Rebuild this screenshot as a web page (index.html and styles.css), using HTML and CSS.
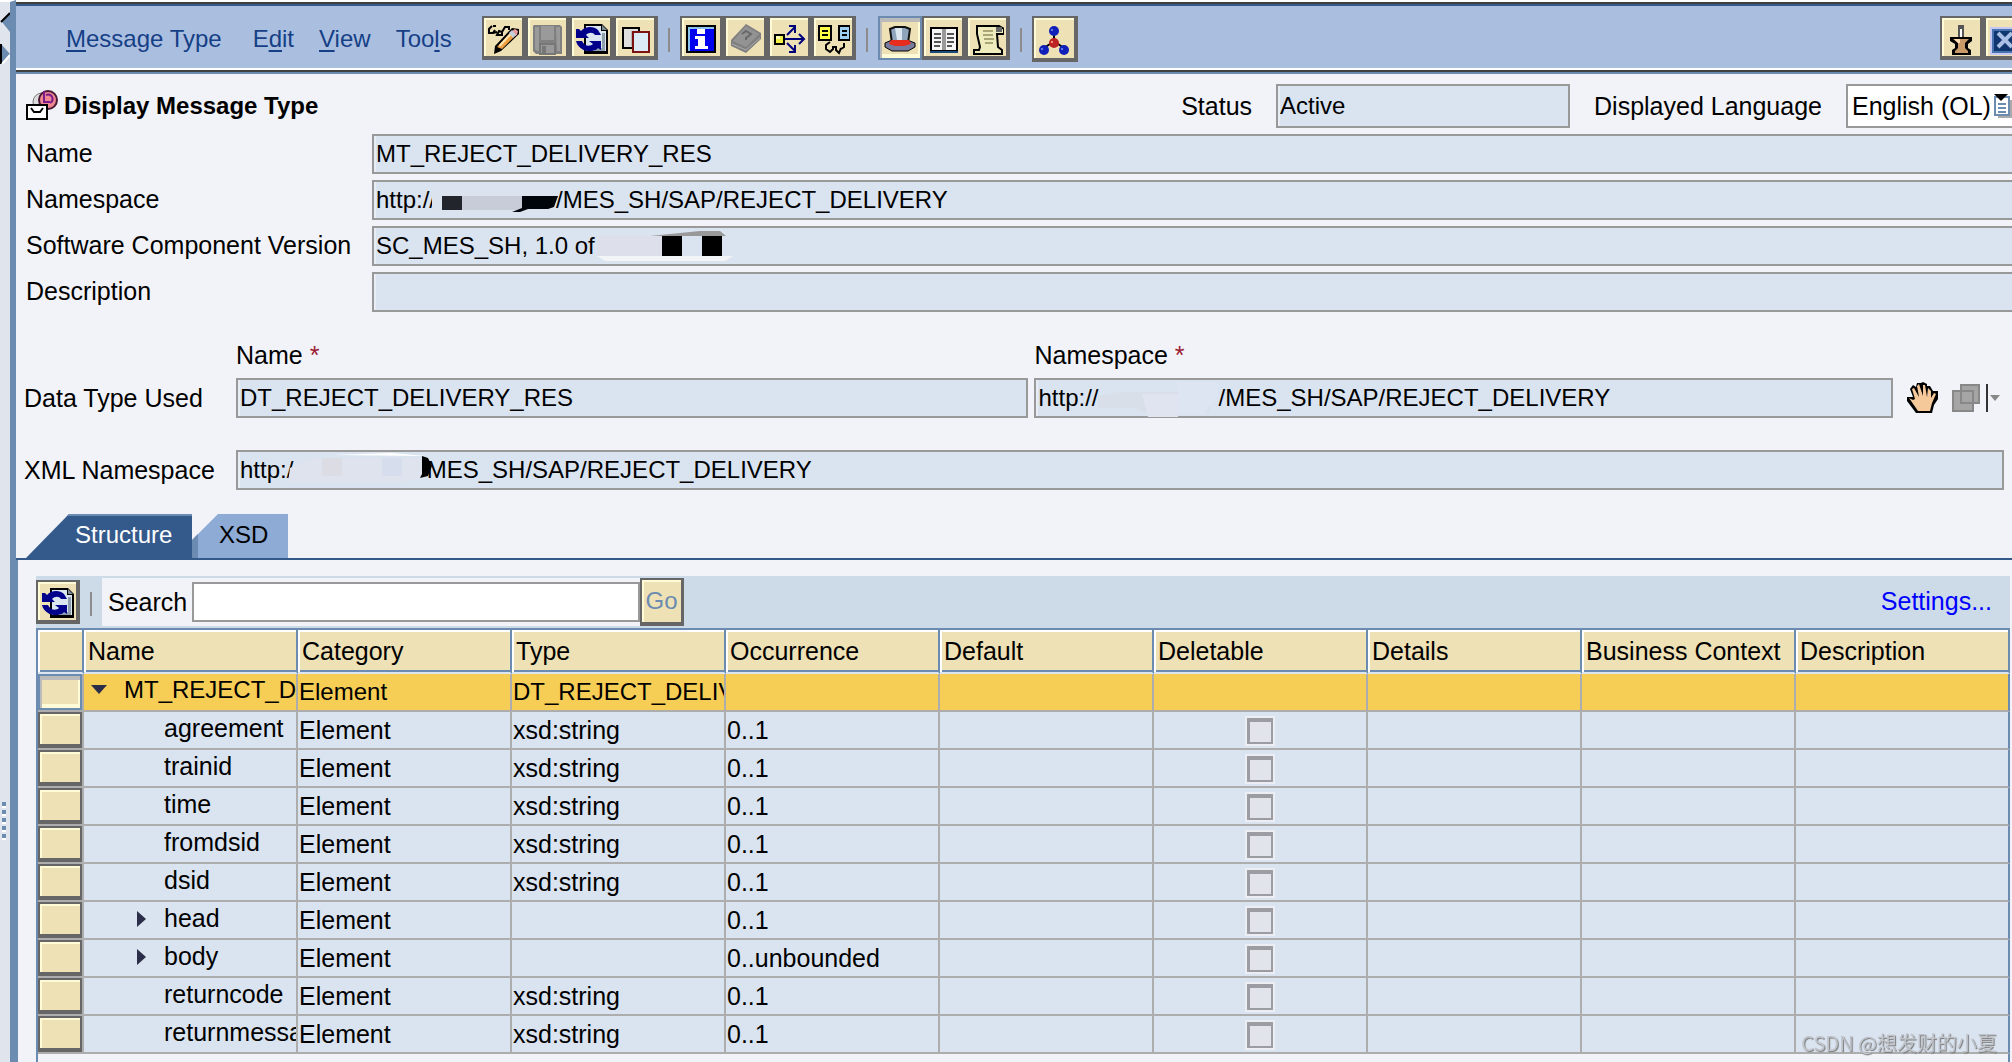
FILE: index.html
```
<!DOCTYPE html>
<html lang="en">
<head>
    <meta charset="UTF-8">
    <title>Display Message Type</title>
    <link rel="stylesheet" href="styles.css">
</head>
<body>
    <svg class="defs">
        <symbol id="i-refresh" viewBox="0 0 32 32">
            <path d="M8 1h18l6 6v24H8z" fill="#000"/>
            <path d="M10 3h15v5h5v20H10z" fill="#dbe7f0"/>
            <path d="M26 2l5 5h-5z" fill="#7b8b95"/>
            <path d="M26 10h3v18H18v-3h8z" fill="#8ea0ad"/>
            <path d="M0 6h3l2 2c4-5 13-5 17-1l3 5h-6c-2-3-6-3-9 0l3 3H0z" fill="#00008b"/>
            <path d="M0 18h6c2 5 8 6 11 3l-4-3h12v9l-3-2c-3 4-12 4-16 1-3-2-5-4-6-8z" fill="#00008b"/>
        </symbol>
    </svg>

    <div class="rail">
        <svg class="rail-arrows" viewBox="0 0 10 60"><path d="M10 9L2 18l8 10z" fill="#6b8bb0"/><path d="M10 9L1 18" stroke="#000" stroke-width="2"/><path d="M2 41l8 9-8 9z" fill="#6b8bb0"/><path d="M0 40h2v20H0z"/><path d="M10 51l-8 9" stroke="#fff" stroke-width="2"/></svg>
        <div class="rail-grip"></div>
    </div>

    <div class="window">
        <!-- menu and toolbar -->
        <header class="topbar">
            <nav class="menu">
                <a href="#"><u>M</u>essage Type</a>
                <a href="#">E<u>d</u>it</a>
                <a href="#"><u>V</u>iew</a>
                <a href="#">Too<u>l</u>s</a>
            </nav>
            <div class="tools">
                <button class="btn" title="Edit"><svg viewBox="0 0 32 32"><path d="M4 3L1 6v4h4l2-3M11 8l-2 4h5V9zM5 10l4-1M5 3h3M14 9l3-5h4v3" fill="none" stroke="#000" stroke-width="2"/><path d="M7 23L24 5l7 1v5L13 28l-7 3z" fill="#000"/><path d="M9 24L23 9l5 3-14 14z" fill="#f0a040"/><path d="M11 22L23 9l2 1-13 14z" fill="#ffe6b0"/><path d="M24 8l3-2 3 2-1 4-2 1z" fill="#e99a9a"/><path d="M21 10l3-3 4 5-3 3z" fill="#c5cfdc"/></svg></button>
                <button class="btn" title="Save" disabled><svg viewBox="0 0 32 32"><path d="M2 2h26l2 2v27H4l-3-3V3z" fill="#808080"/><path d="M3 4h4v24H5l-2-2zM24 4h4v24h-3zM9 3h13v14H9z" fill="#9a9a9a"/><path d="M8 21h15v10H8z" fill="#999" stroke="#777" stroke-width="2"/><path d="M10 23h4v7h-4z" fill="#777"/></svg></button>
                <button class="btn" title="Refresh"><svg><use href="#i-refresh"/></svg></button>
                <button class="btn" title="Copy"><svg viewBox="0 0 32 32"><path d="M3 5h16v20H3z" fill="#dedede" stroke="#000" stroke-width="2"/><path d="M11 8h7v15h-7z" fill="#b5b5b5"/><path d="M13 9h16v20H13z" fill="#dceaf5" stroke="#7d1212" stroke-width="2"/></svg></button>
            </div>
            <span class="sep"></span>
            <div class="tools">
                <button class="btn" title="Info"><svg viewBox="0 0 32 32"><path d="M0 2h30v28H0z" fill="#000"/><path d="M2 4h26v24H2z" fill="#0000f0"/><path d="M2 4h26v2H4v22H2z" fill="#8cc4ec"/><path d="M11 6h8v5h-8zM9 13h10v10h3v3H9v-3h3v-7H9z" fill="#fff"/></svg></button>
                <button class="btn" title="Help" disabled><svg viewBox="0 0 32 32"><path d="M16 1l15 9v6L16 30 1 23v-6z" fill="#808080"/><path d="M16 3l13 8-13 13L3 18z" fill="#939393"/><path d="M12 11l4-3 5 3-5 4v2" fill="none" stroke="#696969" stroke-width="2"/><path d="M2 21l14 6 14-12" fill="none" stroke="#aaa"/></svg></button>
                <button class="btn" title="Where used"><svg viewBox="0 0 32 32"><path d="M9 16h20M13 12l8-8M13 20l8 8M15 3h6v7M25 11l5 5-5 5M15 29h6v-7" fill="none" stroke="#00007d" stroke-width="2"/><path d="M1 12h9v9H1z" fill="#f2ef45" stroke="#000" stroke-width="2"/><path d="M2 13h4v3H2z" fill="#ffffb5"/></svg></button>
                <button class="btn" title="Compare"><svg viewBox="0 0 32 32"><path d="M1 3h12v14H1z" fill="#ffff45" stroke="#000" stroke-width="2"/><path d="M21 3h11v14H21z" fill="#9dd0f0" stroke="#000" stroke-width="2"/><path d="M4 8h6M4 12h6M24 8h5M24 12h5" stroke="#000" stroke-width="2"/><path d="M12 19l-4 3v4l4 3 3-3v-3M15 24h3M18 23v4l3 3 2-5M26 20v4l-3 2" stroke="#000" stroke-width="2" fill="none"/></svg></button>
            </div>
            <span class="sep"></span>
            <div class="tools">
                <button class="btn pressed" title="Display header"><svg viewBox="0 0 32 32"><path d="M1 19l7-3h15l8 3v4l-7 4H8l-7-4z" fill="#777b9d" stroke="#000"/><path d="M6 5l5-2h10l5 2-2 14H8z" fill="#8fa3ba" stroke="#111" stroke-width="2"/><path d="M11 4h7v12h-5z" fill="#dce6ee"/><path d="M7 16h18l2 4-7 2h-9l-6-2z" fill="#e82d20"/></svg></button>
                <button class="btn" title="Documentation"><svg viewBox="0 0 32 32"><path d="M2 4h28v26H2z" fill="#000"/><path d="M4 6h11v21H4zM17 6h11v21H17z" fill="#f5f5f5"/><path d="M14 6h4v21h-4z" fill="#999"/><path d="M6 11h7M6 15h7M6 19h7M6 23h6M19 11h7M19 15h7M19 19h7M19 23h5" stroke="#555" stroke-width="2"/><path d="M2 28h28v2H2z" fill="#194a7a"/></svg></button>
                <button class="btn" title="Log"><svg viewBox="0 0 32 32"><path d="M5 3h22l5 3v5h-7l1 13 4 3v4H2v-4h5l1-3-3-13z" fill="#eeebbd" stroke="#000" stroke-width="2"/><path d="M11 8h10M11 12h10M12 16h10M13 20h8" stroke="#aaa678" stroke-width="2"/><path d="M24 4h6v5h-6z" fill="#666"/></svg></button>
            </div>
            <span class="sep"></span>
            <button class="btn wide" title="Dependencies"><svg viewBox="0 0 32 32"><path d="M16 8v9M15 18L6 24M17 18l9 6" stroke="#000" stroke-width="2"/><circle cx="16" cy="7" r="5" fill="#1020b8"/><circle cx="6" cy="26" r="5" fill="#1020b8"/><circle cx="26" cy="26" r="5" fill="#1020b8"/><circle cx="16" cy="19" r="5" fill="#bd2323"/><path d="M13 5h2v2h-2zM3 24h2v2H3zM23 24h2v2h-2z" fill="#6677e0"/><path d="M13 17h2v2h-2z" fill="#f28b75"/></svg></button>
            <div class="tools right">
                <button class="btn" title="Pin"><svg viewBox="0 0 32 32"><path d="M12 2h6v14h-6z" fill="#555"/><path d="M14 6h2v9h-2z" fill="#fff"/><path d="M4 14h22v4l-4 3v4l3 2v5H6v-5l3-2v-4l-5-3z" fill="#000"/><path d="M7 16h16l-4 4v5l3 3v2H9v-2l3-3v-5z" fill="#c89a68"/><path d="M8 16h6v4h-2z" fill="#fbdbb0"/></svg></button>
                <button class="btn cut" title="Close"><svg viewBox="0 0 32 32"><path d="M0 4h32v28H0z" fill="#c5c8f0"/><path d="M2 6h30v24H2z" fill="#4873b0"/><path d="M4 8h28v20H4z" fill="#10366f"/><path d="M8 10l14 14M22 10L8 24" stroke="#a9bfe5" stroke-width="4"/></svg></button>
            </div>
        </header>

        <main>
            <section class="title-row">
                <svg class="type-icon" viewBox="0 0 32 32"><circle cx="16" cy="12" r="9" fill="#ddd" stroke="#777"/><circle cx="22" cy="10" r="9" fill="#ef8791" stroke="#4b1a35" stroke-width="2"/><path d="M18 1v11h6M20 5c6-2 9 5 4 8" fill="none" stroke="#7a1c8c" stroke-width="2"/><path d="M1 15h20v14H1z" fill="#fff" stroke="#000" stroke-width="2"/><path d="M5 18l3 4h6l3-4" fill="none" stroke="#000" stroke-width="2"/></svg>
                <h1>Display Message Type</h1>
                <label for="status">Status</label>
                <input class="field status" id="status" value="Active" readonly>
                <label for="lang">Displayed Language</label>
                <div class="select">
                    <select id="lang"><option>English (OL)</option></select>
                    <svg viewBox="0 0 18 24"><path d="M4 6h14v18H4z" fill="#aaa"/><path d="M1 3h14v18H1z" fill="#fff" stroke="#6b8bb0" stroke-width="2"/><path d="M4 10h8M4 14h8M4 18h8" stroke="#6b8bb0" stroke-width="2"/><path d="M0 0h14L7 7z"/></svg>
                </div>
            </section>

            <section class="form">
                <label for="name">Name</label>
                <div class="box"><input class="field" id="name" value="MT_REJECT_DELIVERY_RES" readonly></div>
                <label for="ns">Namespace</label>
                <div class="box">
                    <input class="field" id="ns" value="http://                  /MES_SH/SAP/REJECT_DELIVERY" readonly>
                    <svg class="mask" viewBox="0 0 400 40"><path d="M60 6h122v26H60z" fill="#dbe3ef"/><path d="M70 16h20v14H70z" fill="#22252c"/><path d="M90 16h60v14H90z" fill="#c7ccd8"/><path d="M150 16h36l-4 11-6 2h-20l-8 3h-8l10-4z" fill="#00050c"/></svg>
                </div>
                <label for="scv">Software Component Version</label>
                <div class="box">
                    <input class="field" id="scv" value="SC_MES_SH, 1.0 of" readonly>
                    <svg class="mask" viewBox="0 0 400 40"><path d="M278 10l50-5h20l6 5z" fill="#999"/><path d="M226 10h64v20h-64z" fill="#dddfea"/><path d="M290 10h20v20h-20zM330 10h20v20h-20z"/><path d="M225 30h136l-8 5H233z" fill="#f3f4f6"/></svg>
                </div>
                <label for="desc">Description</label>
                <div class="box"><input class="field" id="desc" readonly></div>
            </section>

            <section class="types">
                <label class="head c2" for="dt">Name <em>*</em></label>
                <label class="head c3" for="dtns">Namespace <em>*</em></label>
                <label class="c1" for="dt">Data Type Used</label>
                <input class="field" id="dt" value="DT_REJECT_DELIVERY_RES" readonly>
                <div class="box second">
                    <input class="field" id="dtns" value="http://                  /MES_SH/SAP/REJECT_DELIVERY" readonly>
                    <svg class="mask" viewBox="0 0 400 40"><path d="M64 18l20-4h100l-10 20H110l-8-4H64z" fill="#d8dfe9"/><path d="M108 16h36v23h-30z" fill="#e0e4f1"/><path d="M144 4h40v14l-14 18h-26z" fill="#dde4f2"/></svg>
                </div>
                <div class="type-actions">
                    <svg viewBox="0 0 32 32"><path d="M1 15h6L4 7l3-4 3 2 1-4h4l2-1 4 2v2h3l3 5h5v8l-4 6-2 8H10l-6-8-3-4z" fill="#000"/><path d="M3 16l4 2 2-1L6 7l2-1 5 9L11 4l2-2 4 12V3h2l2 12 1-9 3 3v7l3-5 2 1-4 9-2 8H12z" fill="#f5c99a"/></svg>
                    <svg viewBox="0 0 28 28"><path d="M9 1h18v18H9zM1 7h20v20H1z" fill="#a5a5a5" stroke="#888" stroke-width="2"/></svg>
                    <span class="bar"></span>
                    <span class="tri"></span>
                </div>
            </section>

            <section class="xml">
                <label for="xns">XML Namespace</label>
                <div class="box">
                    <input class="field" id="xns" value="http:/                    MES_SH/SAP/REJECT_DELIVERY" readonly>
                    <svg class="mask" viewBox="0 0 400 40"><path d="M54 18l20-10h112v20l-20 4H52z" fill="#dfe3ee"/><path d="M86 8h20v18H86z" fill="#dcdde4"/><path d="M146 8h20v18h-20z" fill="#d6deee"/><path d="M96 5l60-2 34 3z" fill="#fff"/><path d="M186 6l6 2 4 8-4 10-8 2 2-4z"/></svg>
                </div>
            </section>

            <nav class="tabs">
                <a class="tab active" href="#">Structure</a>
                <a class="tab" href="#">XSD</a>
            </nav>

            <section class="panel">
                <div class="searchbar">
                    <button class="btn" title="Refresh"><svg><use href="#i-refresh"/></svg></button>
                    <span class="sep"></span>
                    <form class="search">
                        <label for="q">Search</label>
                        <input id="q" type="text">
                        <button class="go" type="button">Go</button>
                    </form>
                    <a class="settings" href="#">Settings...</a>
                </div>

                <div class="grid">
                    <table>
                        <thead>
                            <tr><th class="sel"></th><th>Name</th><th>Category</th><th>Type</th><th>Occurrence</th><th>Default</th><th>Deletable</th><th>Details</th><th>Business Context</th><th>Description</th></tr>
                        </thead>
                        <tbody>
                            <tr class="current"><td class="sel"><button title="Select row"></button></td><td class="node root"><i class="open"></i>MT_REJECT_DELIVERY_RES</td><td>Element</td><td>DT_REJECT_DELIVERY_RES</td><td></td><td></td><td></td><td></td><td></td><td></td></tr>
                            <tr><td class="sel"><button title="Select row"></button></td><td class="node">agreement</td><td>Element</td><td>xsd:string</td><td>0..1</td><td></td><td class="check"><input type="checkbox" aria-label="Deletable" disabled></td><td></td><td></td><td></td></tr>
                            <tr><td class="sel"><button title="Select row"></button></td><td class="node">trainid</td><td>Element</td><td>xsd:string</td><td>0..1</td><td></td><td class="check"><input type="checkbox" aria-label="Deletable" disabled></td><td></td><td></td><td></td></tr>
                            <tr><td class="sel"><button title="Select row"></button></td><td class="node">time</td><td>Element</td><td>xsd:string</td><td>0..1</td><td></td><td class="check"><input type="checkbox" aria-label="Deletable" disabled></td><td></td><td></td><td></td></tr>
                            <tr><td class="sel"><button title="Select row"></button></td><td class="node">fromdsid</td><td>Element</td><td>xsd:string</td><td>0..1</td><td></td><td class="check"><input type="checkbox" aria-label="Deletable" disabled></td><td></td><td></td><td></td></tr>
                            <tr><td class="sel"><button title="Select row"></button></td><td class="node">dsid</td><td>Element</td><td>xsd:string</td><td>0..1</td><td></td><td class="check"><input type="checkbox" aria-label="Deletable" disabled></td><td></td><td></td><td></td></tr>
                            <tr><td class="sel"><button title="Select row"></button></td><td class="node parent"><i class="closed"></i>head</td><td>Element</td><td></td><td>0..1</td><td></td><td class="check"><input type="checkbox" aria-label="Deletable" disabled></td><td></td><td></td><td></td></tr>
                            <tr><td class="sel"><button title="Select row"></button></td><td class="node parent"><i class="closed"></i>body</td><td>Element</td><td></td><td>0..unbounded</td><td></td><td class="check"><input type="checkbox" aria-label="Deletable" disabled></td><td></td><td></td><td></td></tr>
                            <tr><td class="sel"><button title="Select row"></button></td><td class="node">returncode</td><td>Element</td><td>xsd:string</td><td>0..1</td><td></td><td class="check"><input type="checkbox" aria-label="Deletable" disabled></td><td></td><td></td><td></td></tr>
                            <tr><td class="sel"><button title="Select row"></button></td><td class="node">returnmessage</td><td>Element</td><td>xsd:string</td><td>0..1</td><td></td><td class="check"><input type="checkbox" aria-label="Deletable" disabled></td><td></td><td></td><td></td></tr>
                        </tbody>
                    </table>
                </div>
            </section>
        </main>
    </div>

    <div class="watermark">CSDN @想发财的小夏</div>
</body>
</html>
```
FILE: styles.css
```
:root {
    --bg: #f2f3f8;
    --steel: #6b8bb0;
    --navy: #345a8c;
    --field: #dae4f0;
    --sand: #eee1b5;
    --gray: #999;
    --line: #adadad;
}

* {
    box-sizing: border-box;
}

body {
    margin: 0;
    min-height: 100vh;
    display: flex;
    overflow: hidden;
    background: var(--bg);
    color: #000;
    font: 25px/30px "Liberation Sans", Arial, "Noto Sans CJK SC", sans-serif;
}

input, select, button {
    font: inherit;
    color: inherit;
    border-radius: 0;
    margin: 0;
}

a {
    text-decoration: none;
}

.defs {
    position: absolute;
    width: 0;
    height: 0;
}

/* left splitter */
.rail {
    flex: none;
    width: 16px;
    position: relative;
    border-top: 2px solid #fff;
    border-right: 6px solid var(--steel);
    background: #e0e4ed;
}

.rail-arrows {
    position: absolute;
    top: 2px;
    left: 0;
    width: 10px;
    height: 60px;
}

.rail-grip {
    position: absolute;
    top: 800px;
    left: 2px;
    width: 4px;
    height: 38px;
    background: repeating-linear-gradient(var(--steel) 0 4px, #fff 4px 6px, transparent 6px 8px);
}

.window {
    flex: 1;
    min-width: 0;
    display: flex;
    flex-direction: column;
    border-top: 2px solid #fff;
}

/* menu bar */
.topbar {
    height: 72px;
    padding: 10px 0 0 50px;
    display: flex;
    align-items: flex-start;
    background: #aabfe0;
    border-top: 2px solid #404040;
    border-bottom: 2px solid var(--steel);
    box-shadow: inset 0 2px var(--navy), inset 0 -2px #404040, inset 0 -4px #fff;
}

.menu {
    display: flex;
    gap: 25px;
    width: 416px;
    padding-top: 10px;
    font-size: 24px;
    white-space: nowrap;
}

.menu a {
    color: #163f86;
}

.menu a:first-child {
    margin-right: 6px;
}

.menu u {
    text-underline-offset: 3px;
    text-decoration-thickness: 2px;
    text-decoration-skip-ink: none;
}

.tools {
    display: flex;
    margin-top: 2px;
}

.btn {
    flex: none;
    width: 44px;
    height: 44px;
    padding: 4px 0 0 4px;
    border: 2px solid #666;
    border-right-width: 4px;
    border-bottom-width: 4px;
    background: var(--sand);
    box-shadow: inset 2px 2px #fffbd6;
}

.btn svg {
    display: block;
    width: 32px;
    height: 32px;
}

.btn.pressed {
    border: 2px solid var(--steel);
    box-shadow: inset 2px 4px #bbb, inset -2px -4px #fffbd6;
}

.btn.wide {
    width: 46px;
    height: 46px;
    margin-top: 2px;
}

.btn.cut {
    width: 28px;
    border-right: 0;
    overflow: hidden;
}

.tools.right {
    margin-left: auto;
}

.sep {
    width: 2px;
    height: 24px;
    margin: 14px 10px 0;
    background: #8c8c8c;
}

/* header form */
.title-row {
    height: 60px;
    padding: 10px 0 6px 10px;
    display: flex;
    align-items: center;
}

.title-row label {
    margin-right: 24px;
}

.type-icon {
    width: 32px;
    height: 32px;
    margin-right: 6px;
}

h1 {
    flex: 1;
    margin: 0;
    font-size: 24px;
    line-height: 30px;
}

.field {
    display: block;
    width: 100%;
    height: 40px;
    padding: 0 2px;
    border: 2px solid var(--gray);
    background: var(--field);
    box-shadow: inset 2px 0 #e8edf5;
    font-size: 24px;
    outline: none;
}

.field.status {
    width: 294px;
    height: 44px;
    margin-right: 24px;
}

.select {
    position: relative;
    width: 166px;
}

.select select {
    display: block;
    appearance: none;
    width: 100%;
    height: 44px;
    padding: 0 4px;
    border: 2px solid var(--gray);
    border-right: 0;
    background: #fff;
}

.select svg {
    position: absolute;
    top: 10px;
    right: 0;
    width: 18px;
    height: 24px;
}

.form {
    display: grid;
    grid-template-columns: 346px 1fr;
    row-gap: 6px;
    align-items: center;
    padding-left: 10px;
}

.form label {
    padding-bottom: 2px;
}

.form .field {
    border-right: 0;
}

.box {
    position: relative;
}

.mask {
    position: absolute;
    top: 0;
    left: 0;
    width: 400px;
    height: 40px;
}

.types {
    display: grid;
    grid-template-columns: 220px 11fr 12fr 119px;
    align-items: center;
    margin-top: 28px;
}

.types .head {
    height: 38px;
}

.types em {
    color: #9c1b34;
    font-style: normal;
}

.c1 {
    padding-left: 8px;
}

.c2 {
    grid-column: 2;
}

.c3 {
    grid-column: 3 / 5;
    padding-left: 6px;
}

.second {
    margin-left: 6px;
}

.type-actions {
    display: flex;
    align-items: center;
    padding-left: 13px;
}

.type-actions svg:first-child {
    width: 32px;
    height: 32px;
    margin-right: 14px;
}

.type-actions svg {
    width: 28px;
    height: 28px;
}

.type-actions .bar {
    width: 2px;
    height: 28px;
    margin: 0 2px 0 6px;
    background: #333;
}

.tri {
    border: 5px solid transparent;
    border-top: 6px solid #888;
    border-bottom: 0;
}

.xml {
    display: grid;
    grid-template-columns: 212px 1fr;
    align-items: center;
    margin-top: 32px;
    padding: 0 8px;
}

/* tabs */
.tabs {
    display: flex;
    margin-top: 24px;
    padding-left: 10px;
    border-bottom: 2px solid var(--navy);
    font-size: 24px;
}

.tab {
    width: 96px;
    height: 44px;
    padding-left: 27px;
    line-height: 42px;
    color: #000;
    background: #8dabd4;
    clip-path: polygon(0 26px, 26px 0, 100% 0, 100% 100%, 0 100%);
    box-shadow: inset 6px 0 var(--steel);
}

.tab.active {
    width: 166px;
    padding-left: 49px;
    color: #fff;
    background: var(--navy);
    clip-path: polygon(0 100%, 43px 0, 100% 0, 100% 100%);
    box-shadow: inset 0 2px var(--steel);
}

main {
    flex: 1;
    display: flex;
    flex-direction: column;
}

.panel {
    flex: 1;
    display: flex;
    flex-direction: column;
    padding: 16px 2px 0 18px;
    border-left: 2px solid var(--steel);
}

.searchbar {
    height: 52px;
    display: flex;
    align-items: flex-start;
    padding-top: 2px;
    background: #cddbe8;
}

.searchbar .btn {
    margin-top: 2px;
}

.search {
    display: flex;
    align-items: center;
    height: 48px;
    background: var(--bg);
}

.search label {
    width: 90px;
    padding-left: 6px;
}

.search input {
    width: 448px;
    height: 40px;
    border: 2px solid var(--gray);
    background: #fff;
}

.go {
    width: 44px;
    height: 48px;
    padding: 0;
    border: 2px solid #666;
    border-right-width: 3px;
    border-bottom-width: 4px;
    background: var(--sand);
    box-shadow: inset 2px 2px #fffbd6;
    color: var(--steel);
    font-size: 24px;
}

.settings {
    margin-left: auto;
    padding: 8px 18px 0 0;
    color: #00f;
}

/* structure table */
.grid {
    flex: 1;
    border-top: 2px solid var(--steel);
    border-left: 2px solid var(--steel);
    box-shadow: inset -2px 0 var(--steel);
}

table {
    width: 100%;
    table-layout: fixed;
    border-spacing: 0;
}

th, td {
    padding: 0;
    text-align: left;
    font-weight: normal;
    white-space: nowrap;
    overflow: hidden;
}

th {
    height: 44px;
    padding-left: 4px;
    border-right: 2px solid var(--steel);
    border-bottom: 2px solid #dde5f0;
    background: var(--sand);
    box-shadow: inset 2px 2px #fff, inset 0 -2px var(--steel);
}

td {
    height: 38px;
    padding-left: 1px;
    border-right: 2px solid var(--line);
    border-bottom: 2px solid var(--line);
    background: var(--field);
}

td:last-child {
    border-right-color: var(--steel);
}

.sel {
    width: 46px;
    padding: 0;
}

.sel button {
    display: block;
    width: 44px;
    height: 36px;
    border: 2px solid #666;
    border-bottom-width: 4px;
    background: var(--sand);
    box-shadow: inset 2px 2px #fffbd6;
}

.current td {
    background: #f6cd55;
    font-size: 24px;
}

.current .sel button {
    border: 2px solid var(--steel);
    box-shadow: inset 2px 4px #bbb, inset -2px -4px #fffbd6;
}

td.node {
    padding: 0 0 5px 80px;
}

td.root {
    padding-left: 7px;
}

td.parent {
    padding-left: 53px;
}

.node i {
    display: inline-block;
}

.open {
    margin: 0 17px 4px 0;
    border: 8px solid transparent;
    border-top: 9px solid #2b2e48;
    border-bottom: 0;
}

.closed {
    margin-right: 18px;
    border: 8px solid transparent;
    border-left: 9px solid #2b2e48;
    border-right: 0;
}

td.check {
    padding: 0;
    text-align: center;
}

.check input {
    display: block;
    appearance: none;
    width: 26px;
    height: 26px;
    margin: 2px auto 0;
    border: 2px solid #9b9da3;
    border-top-width: 4px;
    border-left-width: 3px;
    outline: 2px solid #eceef4;
    background: #e1e5eb;
}

.watermark {
    position: fixed;
    right: 15px;
    bottom: 4px;
    color: #c0c4ca;
    font: 20px/30px "Noto Sans CJK SC", sans-serif;
    text-shadow: 1px 1px 1px #777;
}
```
